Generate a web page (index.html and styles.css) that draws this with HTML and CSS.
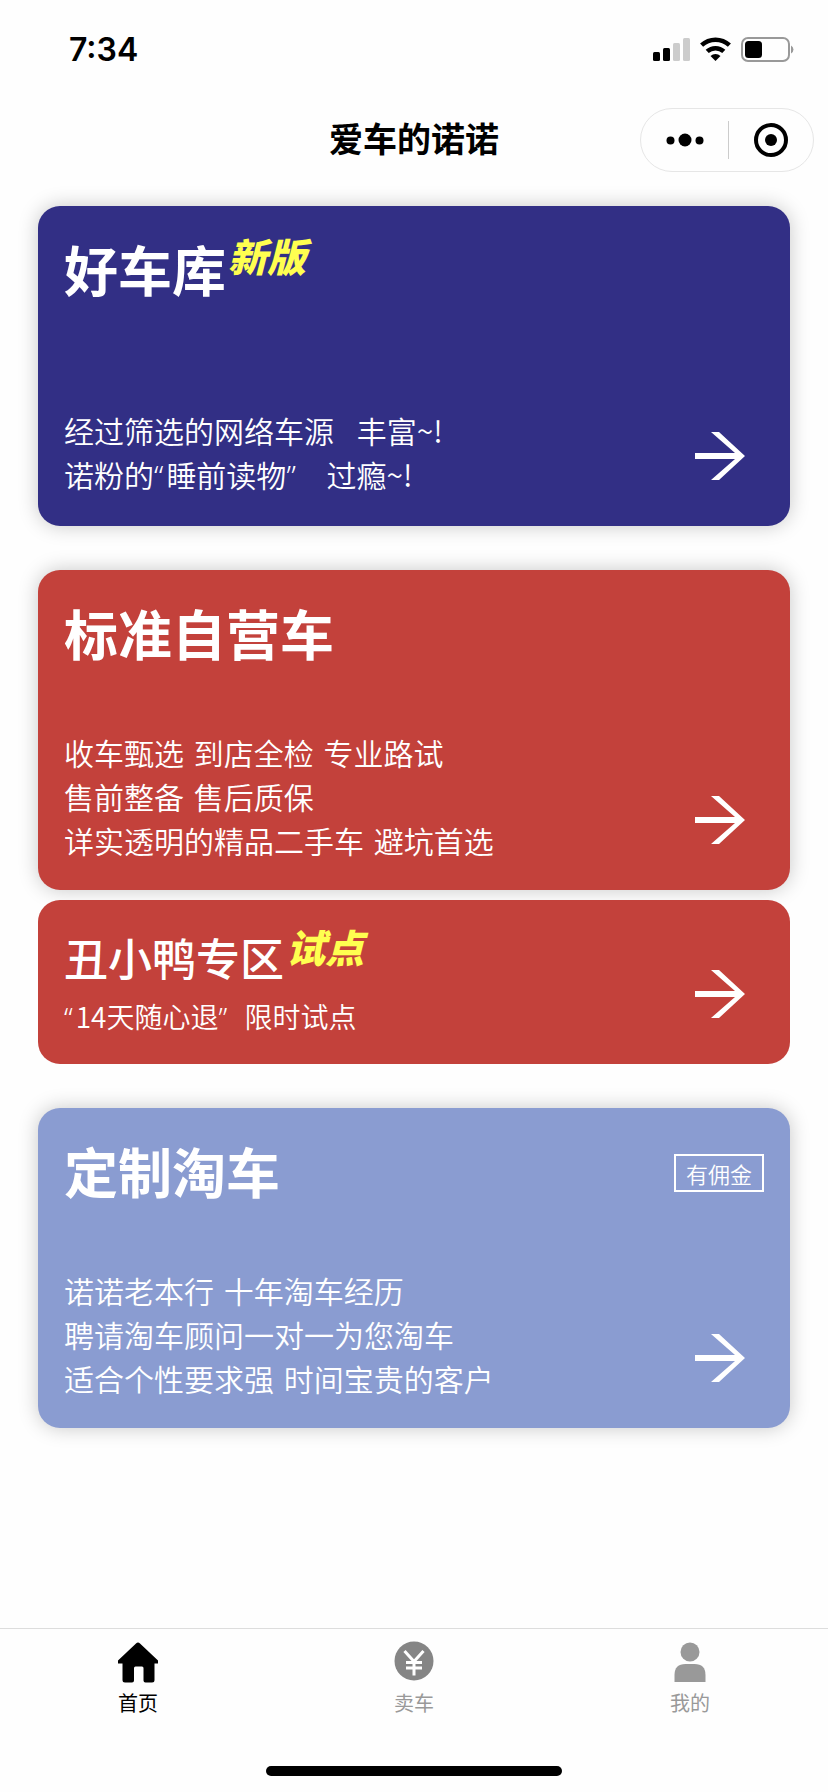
FILE: index.html
```
<!DOCTYPE html>
<html lang="zh-CN">
  <head>
    <meta charset="utf-8">
    <meta name="viewport" content="width=device-width, initial-scale=1">
    <title>爱车的诺诺</title>
    <link rel="stylesheet" href="styles.css">
  </head>
  <body>
    <div class="status-bar">
      <span class="time">7:34</span>
      <svg class="status-icons" viewBox="0 0 142 26" aria-hidden="true">
        <rect x="0" y="15" width="7" height="9" rx="1.5"/>
        <rect x="10" y="11" width="7" height="13" rx="1.5"/>
        <rect class="dim" x="20" y="6" width="7" height="18" rx="1.5"/>
        <rect class="dim" x="30" y="1" width="7" height="23" rx="1.5"/>
        <path class="wave" d="M48.6 8.2a20.5 20.5 0 0 1 27.8 0M54.2 14.4a12.2 12.2 0 0 1 16.6 0"/>
        <path d="M62.5 24l-5-5a7.4 7.4 0 0 1 10 0z"/>
        <rect class="battery" x="89" y="1" width="47" height="23" rx="6"/>
        <rect x="92" y="4" width="17" height="17" rx="3.5"/>
        <path class="cap" d="M138 8.5a4.5 4.5 0 0 1 0 8z"/>
      </svg>
    </div>
    <header class="nav-bar">
      <h1>爱车的诺诺</h1>
      <div class="capsule">
        <button type="button" aria-label="更多">
          <svg width="38" height="14" viewBox="0 0 38 14">
            <circle cx="4.5" cy="7.5" r="4"/>
            <circle cx="19" cy="7" r="6.5"/>
            <circle cx="33.5" cy="7.5" r="4"/>
          </svg>
        </button>
        <button type="button" aria-label="关闭">
          <svg width="34" height="34" viewBox="0 0 34 34">
            <circle class="ring" cx="17" cy="17" r="15"/>
            <circle cx="17" cy="17" r="6"/>
          </svg>
        </button>
      </div>
    </header>
    <main>
      <a href="#" class="card blue">
        <div class="card-main">
          <h2>好车库<em>新版</em></h2>
          <div class="desc">
            <p>经过筛选的网络车源 <span class="wide">丰富~!</span></p>
            <p>诺粉的<q>睡前读物</q> <span class="wide">过瘾~!</span></p>
          </div>
        </div>
        <div class="card-side">
          <svg class="arrow" viewBox="0 0 50 48"><path d="M0 21h40L16 0h8l26 24-26 24h-8l24-21H0z"/></svg>
        </div>
      </a>
      <a href="#" class="card red">
        <div class="card-main">
          <h2>标准自营车</h2>
          <div class="desc">
            <p>收车甄选 <span>到店全检</span> <span>专业路试</span></p>
            <p>售前整备 <span>售后质保</span></p>
            <p>详实透明的精品二手车 <span>避坑首选</span></p>
          </div>
        </div>
        <div class="card-side">
          <svg class="arrow" viewBox="0 0 50 48"><path d="M0 21h40L16 0h8l26 24-26 24h-8l24-21H0z"/></svg>
        </div>
      </a>
      <a href="#" class="card red small">
        <div class="card-main">
          <h2>丑小鸭专区<em>试点</em></h2>
          <div class="desc">
            <p><q>14天随心退</q> <span>限时试点</span></p>
          </div>
        </div>
        <div class="card-side">
          <svg class="arrow" viewBox="0 0 50 48"><path d="M0 21h40L16 0h8l26 24-26 24h-8l24-21H0z"/></svg>
        </div>
      </a>
      <a href="#" class="card light">
        <div class="card-main">
          <h2>定制淘车</h2>
          <div class="desc">
            <p>诺诺老本行 <span>十年淘车经历</span></p>
            <p>聘请淘车顾问一对一为您淘车</p>
            <p>适合个性要求强 <span>时间宝贵的客户</span></p>
          </div>
        </div>
        <div class="card-side">
          <span class="tag">有佣金</span>
          <svg class="arrow" viewBox="0 0 50 48"><path d="M0 21h40L16 0h8l26 24-26 24h-8l24-21H0z"/></svg>
        </div>
      </a>
    </main>
    <footer>
      <nav class="tab-bar">
        <a href="#" class="tab active">
          <svg viewBox="0 0 42 42"><path d="M21 1.500q1 0 2 1L41 19.500v3h-3.500v16.500q0 2.500-2.500 2.500h-6.500q-2 0-2-2v-12.500q0-1.500-1.500-1.500h-6.500q-1.500 0-1.500 1.500v12.500q0 2-2 2H8Q5.500 41.500 5.500 39V22.500H1v-3L19 2.500q1-1 2-1z"/></svg>
          首页
        </a>
        <a href="#" class="tab">
          <svg viewBox="0 0 42 42"><circle class="coin" cx="21" cy="20" r="19.500"/><path class="yen" d="M11.500 10L21 20.500l9.500-10.500M21 20.500v14M13 21.500h16M13 27h16"/></svg>
          卖车
        </a>
        <a href="#" class="tab">
          <svg viewBox="0 0 42 42"><circle cx="21" cy="11" r="9.500"/><path d="M5.500 41V34q0-11 11-11h9q11 0 11 11v7z"/></svg>
          我的
        </a>
      </nav>
      <div class="home-indicator"></div>
    </footer>
  </body>
</html>
```
FILE: styles.css
```
* {
  box-sizing: border-box;
}
body {
  margin: 0;
  min-height: 100vh;
  display: flex;
  flex-direction: column;
  background: #fefefe;
  color: #000;
  font-family: "Noto Sans CJK SC", sans-serif;
}
h1, h2, p {
  margin: 0;
}
a {
  color: inherit;
  text-decoration: none;
}
svg {
  display: block;
  fill: currentColor;
}

/* status bar */
.status-bar {
  display: flex;
  align-items: center;
  justify-content: space-between;
  height: 100px;
  padding: 0 33px 0 69px;
}
.time {
  font: 600 32px/40px Inter, sans-serif;
}
.status-icons {
  width: 142px;
  height: 26px;
}
.status-icons .dim {
  fill: #ccc;
}
.status-icons .wave {
  fill: none;
  stroke: #000;
  stroke-width: 4.5;
}
.status-icons .battery {
  fill: none;
  stroke: #999;
  stroke-width: 2;
}
.status-icons .cap {
  fill: #999;
}

/* nav bar */
.nav-bar {
  display: grid;
  grid-template-columns: 1fr auto 1fr;
  align-items: center;
  height: 80px;
  padding: 0 14px;
}
.nav-bar h1 {
  grid-column: 2;
  padding-bottom: 4px;
  font-size: 34px;
  font-weight: 700;
  line-height: 44px;
}
.capsule {
  justify-self: end;
  display: flex;
  align-items: center;
  width: 174px;
  height: 64px;
  padding-left: 2px;
  border: 1px solid #e6e6e6;
  border-radius: 32px;
}
.capsule button {
  flex: 1;
  display: flex;
  justify-content: center;
  align-items: center;
  height: 38px;
  padding: 0;
  border: 0;
  background: none;
  color: #000;
}
.capsule button + button {
  border-left: 1px solid #ccc;
}
.capsule .ring {
  fill: none;
  stroke: #000;
  stroke-width: 4;
}

/* cards */
main {
  padding: 26px 38px;
}
.card {
  display: flex;
  min-height: 320px;
  margin-bottom: 44px;
  padding: 26px;
  border-radius: 22px;
  color: #fff;
  box-shadow: 0 0 20px rgba(0, 0, 0, .22);
}
.blue {
  background: #322f85;
}
.red {
  background: #c3413b;
}
.light {
  background: #8a9cd1;
}
.card-main {
  flex: 1;
  display: flex;
  flex-direction: column;
  justify-content: space-between;
}
.card h2 {
  display: flex;
  font-size: 54px;
  font-weight: 700;
  line-height: 74px;
}
.card em {
  margin-left: 2px;
  color: #ffff50;
  font-size: 39px;
  font-weight: 900;
  line-height: 46px;
}
.desc {
  margin-bottom: 2px;
  font-size: 30px;
  font-weight: 350;
  line-height: 44px;
}
.desc span {
  margin-left: 3px;
}
.desc .wide {
  margin-left: 16px;
}
.desc q {
  quotes: "“" "”";
}
.desc q::before,
.desc q::after {
  font-family: "Noto Sans", sans-serif;
}
.desc q::before {
  margin-right: 3px;
}
.desc q::after {
  margin-right: 8px;
}
.card-side {
  display: flex;
  flex-direction: column;
  align-items: flex-end;
  padding: 20px 0;
}
.tag {
  padding: 0 10px;
  border: 2px solid #fff;
  font-size: 22px;
  font-weight: 350;
  line-height: 34px;
}
.arrow {
  width: 50px;
  height: 48px;
  margin: auto 19px 0 0;
}
.small {
  min-height: 164px;
  box-shadow: none;
}
.small h2 {
  font-size: 44px;
  font-weight: 500;
  line-height: 62px;
}
.small em {
  line-height: 40px;
}
.small .desc {
  margin-bottom: 0;
  font-size: 28px;
  line-height: 42px;
}
.red:not(.small) {
  margin-bottom: 10px;
}

/* tab bar */
footer {
  margin-top: auto;
  padding-bottom: 16px;
  border-top: 1px solid #ddd;
}
.tab-bar {
  display: flex;
  height: 137px;
  padding-top: 12px;
}
.tab {
  flex: 1;
  display: flex;
  flex-direction: column;
  align-items: center;
  gap: 6px;
  color: #999;
  font-size: 20px;
  line-height: 28px;
}
.tab svg {
  width: 42px;
  height: 42px;
}
.active {
  color: #000;
}
.coin {
  fill: #858585;
}
.yen {
  fill: none;
  stroke: #fff;
  stroke-width: 3;
}
.home-indicator {
  width: 296px;
  height: 10px;
  margin: 0 auto;
  border-radius: 5px;
  background: #000;
}
```
